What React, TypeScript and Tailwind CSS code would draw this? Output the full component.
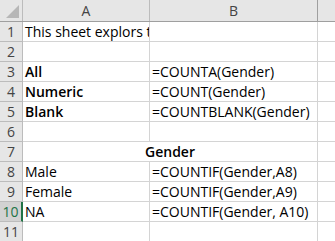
const rows: { a?: string; b?: string; bold?: boolean; merged?: string }[] = [
  { a: 'This sheet explors the Gender column' },
  {},
  { a: 'All', b: '=COUNTA(Gender)', bold: true },
  { a: 'Numeric', b: '=COUNT(Gender)', bold: true },
  { a: 'Blank', b: '=COUNTBLANK(Gender)', bold: true },
  {},
  { merged: 'Gender' },
  { a: 'Male', b: '=COUNTIF(Gender,A8)' },
  { a: 'Female', b: '=COUNTIF(Gender,A9)' },
  { a: 'NA', b: '=COUNTIF(Gender, A10)' },
  {},
];

const font = { fontFamily: '"Open Sans", "Noto Sans", sans-serif' };

export default function App() {
  return (
    <div className="w-[335px] h-[241px] overflow-hidden bg-white text-[14px] text-black" style={font}>
      {/* column headers */}
      <div className="flex h-[22px] bg-[#e6e6e6] border-b border-[#9f9f9f]">
        <div className="relative w-[23px] shrink-0 border-r border-[#bcbcbc]">
          <div className="absolute right-[3px] bottom-[3px] w-0 h-0 border-l-[13px] border-l-transparent border-b-[13px] border-b-[#b7b7b7]" />
        </div>
        <div className="w-[127px] shrink-0 border-r border-[#bcbcbc] flex items-center justify-center text-[#444]">
          A
        </div>
        <div className="w-[168px] shrink-0 border-r border-[#9f9f9f] flex items-center justify-center text-[#444]">
          B
        </div>
        <div className="flex-1" />
      </div>

      {rows.map((r, i) => {
        const sel = i === 9;
        return (
          <div key={i} className="flex h-[20px]">
            <div
              className={`w-[23px] shrink-0 flex items-center justify-center border-b border-r ${
                sel
                  ? 'bg-[#d2d2d2] text-[#217346] border-r-2 border-r-[#217346] border-b-[#bcbcbc]'
                  : 'bg-[#e6e6e6] text-[#444] border-[#bcbcbc]'
              }`}
            >
              {i + 1}
            </div>
            {r.merged ? (
              <div className="w-[295px] shrink-0 border-r border-b border-[#d4d4d4] flex items-center justify-center font-semibold">
                {r.merged}
              </div>
            ) : (
              <>
                <div
                  className={`w-[127px] shrink-0 border-r border-b border-[#d4d4d4] flex items-center pl-[2px] overflow-hidden whitespace-nowrap ${
                    r.bold ? 'font-semibold' : ''
                  }`}
                >
                  {r.a}
                </div>
                <div className="w-[168px] shrink-0 border-r border-b border-[#d4d4d4] flex items-center pl-[2px] whitespace-nowrap">
                  {r.b}
                </div>
              </>
            )}
            <div className="flex-1 border-b border-[#d4d4d4]" />
          </div>
        );
      })}
    </div>
  );
}
